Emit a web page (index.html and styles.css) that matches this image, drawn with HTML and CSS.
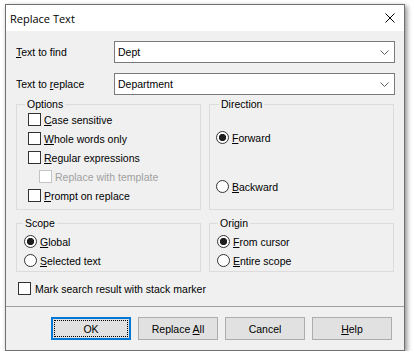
FILE: index.html
```html
<!DOCTYPE html>
<html lang="en">
<head>
  <meta charset="UTF-8">
  <title>Replace Text</title>
  <link rel="stylesheet" href="styles.css">
</head>
<body>
  <div class="window">
    <div class="titlebar">
      <span class="title">Replace Text</span>
      <svg class="close" viewBox="0 0 10 10" width="10" height="10">
        <path d="M0.5 0.5 L9.5 9.5 M9.5 0.5 L0.5 9.5" stroke="#000" stroke-width="1" fill="none"></path>
      </svg>
    </div>

    <div class="content">
      <div class="field-row">
        <span class="field-label"><u>T</u>ext to find</span>
        <div class="combo">
          <span>Dept</span>
          <svg class="chevron" viewBox="0 0 9 5" width="9" height="5">
            <path d="M0.5 0.5 L4.5 4.5 L8.5 0.5" stroke="#606060" stroke-width="1" fill="none"></path>
          </svg>
        </div>
      </div>
      <div class="field-row">
        <span class="field-label">Text to <u>r</u>eplace</span>
        <div class="combo">
          <span>Department</span>
          <svg class="chevron" viewBox="0 0 9 5" width="9" height="5">
            <path d="M0.5 0.5 L4.5 4.5 L8.5 0.5" stroke="#606060" stroke-width="1" fill="none"></path>
          </svg>
        </div>
      </div>

      <div class="groups">
        <fieldset class="group options">
          <legend>Options</legend>
          <div class="opt"><span class="box"></span><span><u>C</u>ase sensitive</span></div>
          <div class="opt"><span class="box"></span><span><u>W</u>hole words only</span></div>
          <div class="opt"><span class="box"></span><span><u>R</u>egular expressions</span></div>
          <div class="opt indent disabled"><span class="box"></span><span>Replace with template</span></div>
          <div class="opt"><span class="box"></span><span><u>P</u>rompt on replace</span></div>
        </fieldset>

        <fieldset class="group direction">
          <legend>Direction</legend>
          <div class="opt"><span class="radio checked"></span><span><u>F</u>orward</span></div>
          <div class="opt backward"><span class="radio"></span><span><u>B</u>ackward</span></div>
        </fieldset>

        <fieldset class="group scope">
          <legend>Scope</legend>
          <div class="opt"><span class="radio checked"></span><span><u>G</u>lobal</span></div>
          <div class="opt"><span class="radio"></span><span><u>S</u>elected text</span></div>
        </fieldset>

        <fieldset class="group origin">
          <legend>Origin</legend>
          <div class="opt"><span class="radio checked"></span><span><u>F</u>rom cursor</span></div>
          <div class="opt"><span class="radio"></span><span><u>E</u>ntire scope</span></div>
        </fieldset>
      </div>

      <div class="opt mark"><span class="box"></span><span>Mark search result with stack marker</span></div>
    </div>

    <div class="footer">
      <button class="btn default"><span class="focus">OK</span></button>
      <button class="btn">Replace <u>A</u>ll</button>
      <button class="btn">Cancel</button>
      <button class="btn"><u>H</u>elp</button>
    </div>
  </div>
</body>
</html>
```

FILE: styles.css
```css
:root {
  --face: #f0f0f0;
  --frame: #707070;
  --group-line: #dcdcdc;
  --text: #000000;
  --disabled: #a0a0a0;
  --accent: #0078d7;
  --font-ui: "Liberation Sans", Arial, sans-serif;
}

* {
  box-sizing: border-box;
}

body {
  margin: 0;
  background: #ffffff;
  font-family: var(--font-ui);
  font-size: 10.5px;
  color: var(--text);
}

u {
  text-decoration: underline;
  text-underline-offset: 1px;
}

.window {
  width: 400px;
  margin: 4px 0 0 5px;
  border: 1px solid var(--frame);
  background: var(--face);
  box-shadow: 2px 2px 5px rgba(0, 0, 0, 0.45);
}

.titlebar {
  height: 26px;
  background: #ffffff;
  display: flex;
  align-items: center;
  justify-content: space-between;
  padding: 0 9px 0 4px;
}

.title {
  font-family: "Open Sans", var(--font-ui);
  font-size: 11px;
  color: #000;
}

.close {
  display: block;
}

.content {
  padding: 10px 9px 8px 10px;
}

.field-row {
  display: flex;
  align-items: center;
  margin-bottom: 10px;
}

.field-label {
  width: 98px;
}

.combo {
  width: 281px;
  height: 22px;
  border: 1px solid #7a7a7a;
  background: #ffffff;
  display: flex;
  align-items: center;
  justify-content: space-between;
  padding: 0 5px 0 3px;
}

.chevron {
  display: block;
}

.groups {
  display: grid;
  grid-template-columns: 185px 185px;
  column-gap: 8px;
  row-gap: 7px;
  margin-top: -7px;
}

.group {
  margin: 0;
  border: 1px solid var(--group-line);
  min-width: 0;
}

.group legend {
  padding: 0 2px;
  line-height: 12px;
}

.options {
  padding: 0 0 4px 11px;
}

.options legend {
  margin-left: -3px;
}

.direction {
  padding: 18px 0 12px 6px;
}

.direction legend {
  margin-left: 3px;
}

.scope {
  padding: 3px 0 1px 7px;
}

.scope legend {
  margin-left: -1px;
}

.origin {
  padding: 3px 0 1px 7px;
}

.origin legend {
  margin-left: 1px;
}

.opt {
  height: 19px;
  display: flex;
  align-items: center;
  gap: 3px;
}

.indent {
  padding-left: 11px;
}

.disabled {
  color: var(--disabled);
}

.box {
  width: 13px;
  height: 13px;
  border: 1px solid #333333;
  background: #ffffff;
  flex: none;
}

.disabled .box {
  border-color: #c4c4c4;
}

.radio {
  width: 13px;
  height: 13px;
  border: 1px solid #333333;
  border-radius: 50%;
  background: #ffffff;
  flex: none;
}

.radio.checked {
  background: radial-gradient(circle, #1e1e1e 3.3px, #ffffff 4px);
}

.backward {
  margin-top: 30px;
}

.mark {
  margin-top: 7px;
  padding-left: 2px;
  gap: 4px;
}

.footer {
  border-top: 1px solid #a0a0a0;
  display: flex;
  justify-content: flex-end;
  gap: 7px;
  padding: 10px 12px 10px 0;
}

.btn {
  width: 80px;
  height: 23px;
  border: 1px solid #adadad;
  background: #e1e1e1;
  font-family: var(--font-ui);
  font-size: 10.5px;
  color: #000;
  padding: 0;
}

.btn.default {
  border: 2px solid var(--accent);
  padding: 1px;
}

.focus {
  display: flex;
  align-items: center;
  justify-content: center;
  height: 100%;
  border: 1px dotted #000;
}
```
